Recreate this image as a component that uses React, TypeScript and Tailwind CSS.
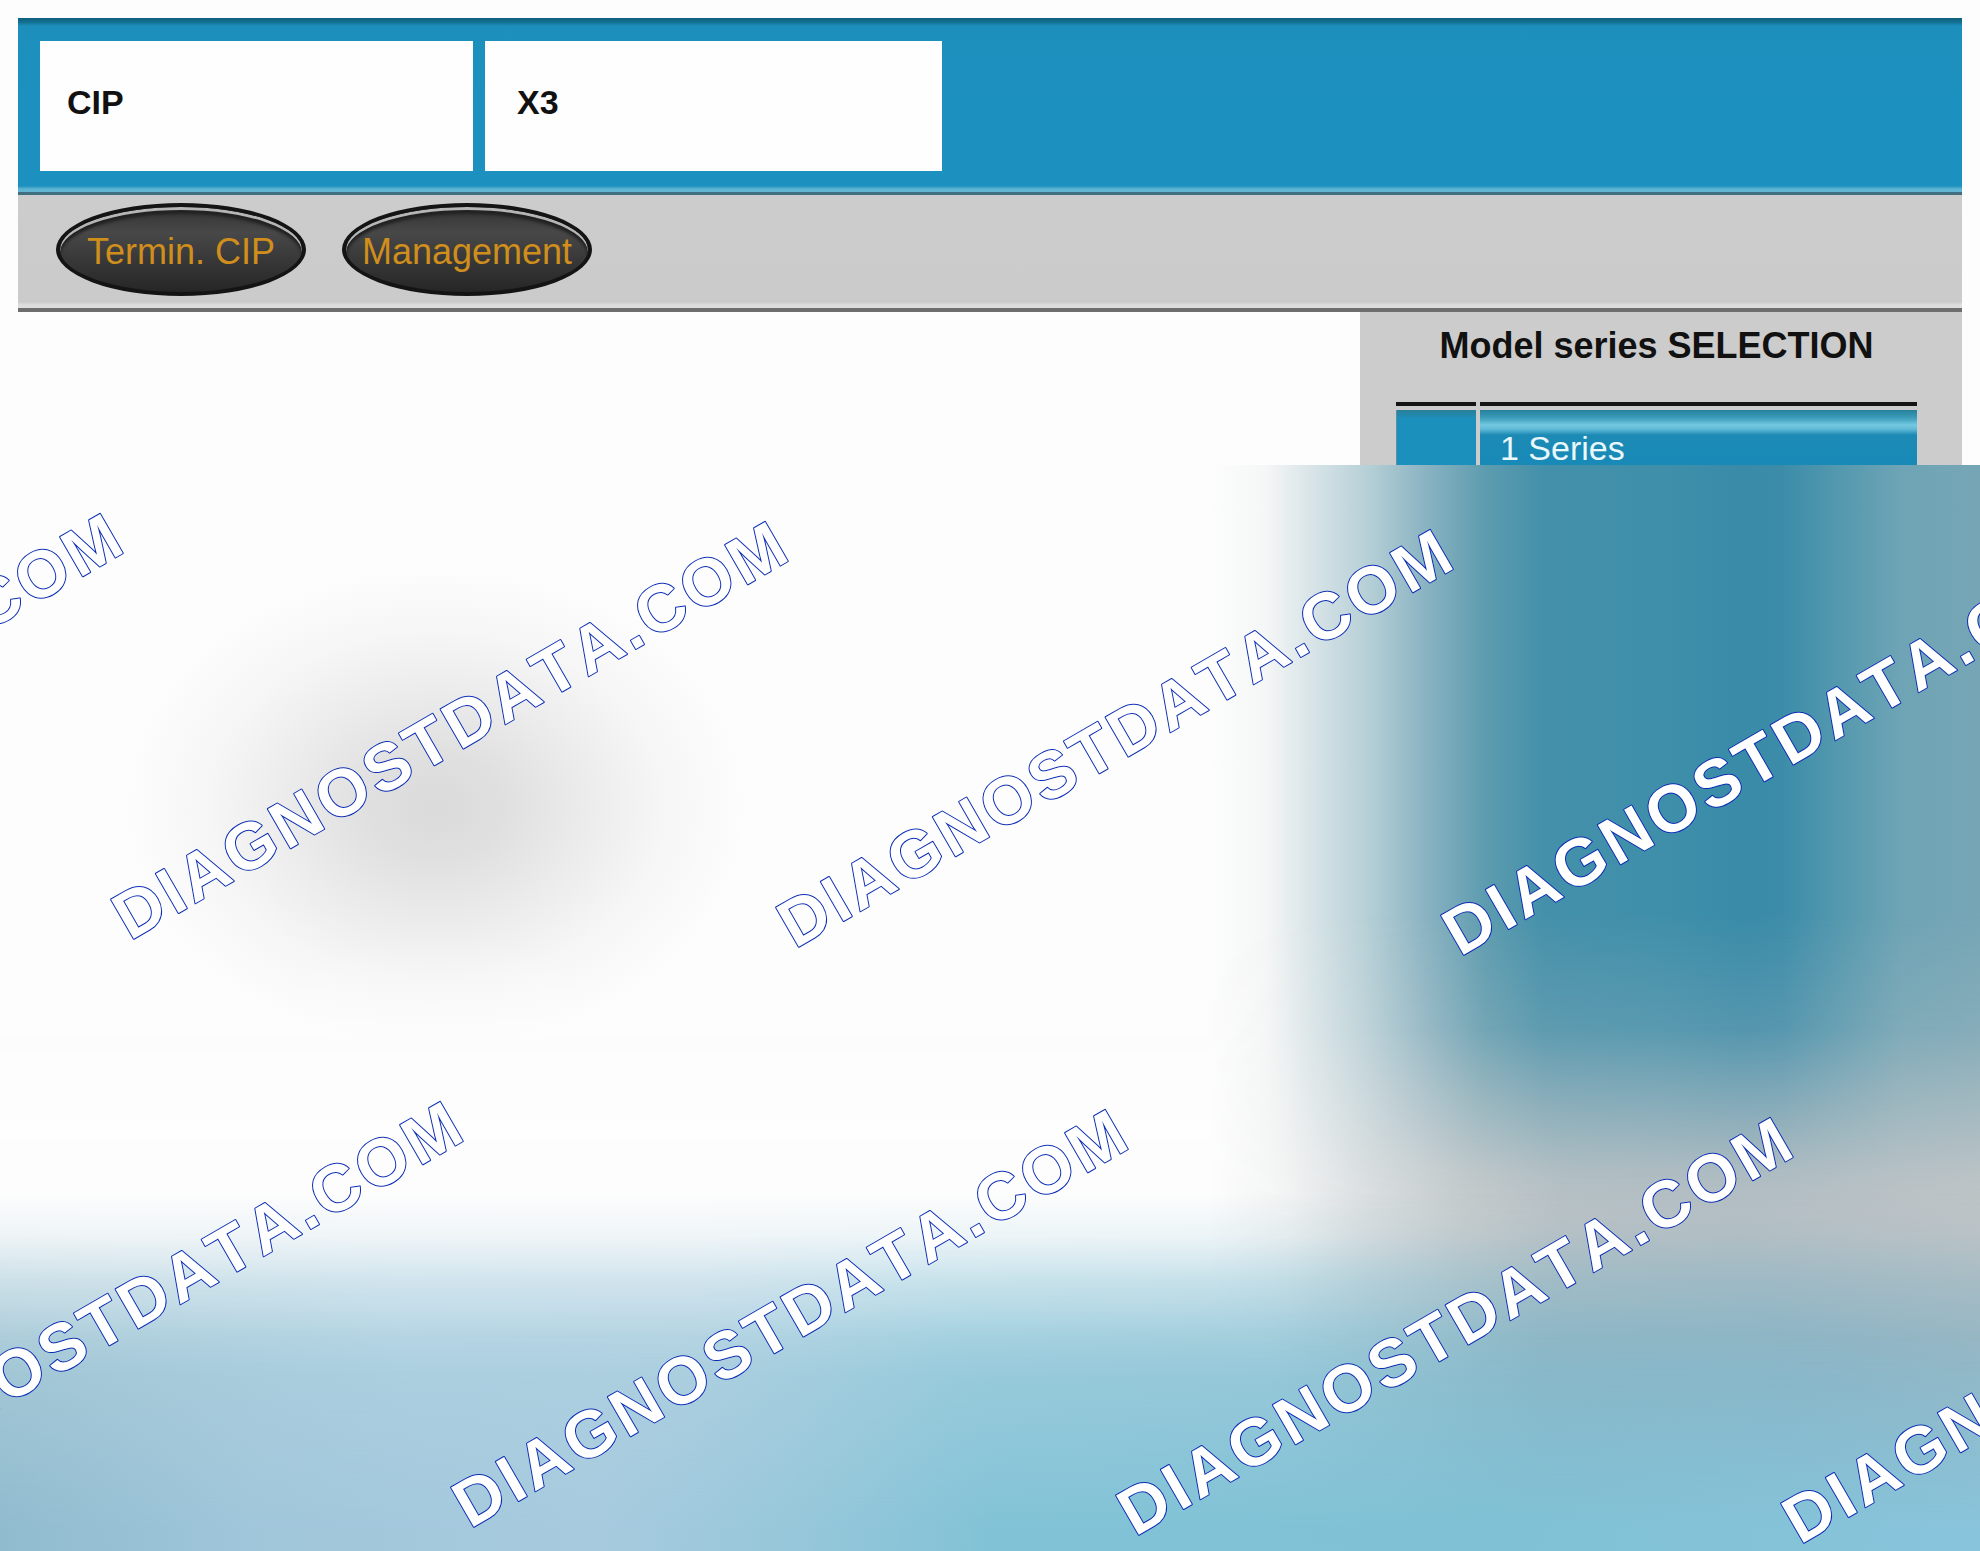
const seriesList = ["1 Series"];

// baseline start of each watermark line
const marks = [
  { x: -535, y: 468 },
  { x: 130, y: 476 },
  { x: 795, y: 484 },
  { x: 1460, y: 492 },
  { x: -195, y: 1056 },
  { x: 470, y: 1064 },
  { x: 1135, y: 1072 },
  { x: 1800, y: 1080 },
];

function InfoBox({ text, className }: { text: string; className: string }) {
  return (
    <div className={`flex items-center bg-[#fefefe] pb-2 text-[34px] leading-10 font-bold text-[#111111] ${className}`}>
      {text}
    </div>
  );
}

function OvalButton({ label }: { label: string }) {
  return (
    <button
      type="button"
      className="h-[93px] w-[250px] rounded-[50%] border-4 border-[#141414] bg-linear-to-b from-[#333333] via-[#484848] via-30% to-[#262626] pt-1 text-4xl whitespace-nowrap text-[#d08e1c] shadow-[inset_0_3px_0_#b5b5b5,inset_0_7px_3px_#222222]"
    >
      {label}
    </button>
  );
}

function Backdrop() {
  return (
    <>
      {/* White area and teal column */}
      <div className="absolute inset-0 bg-[linear-gradient(90deg,#fdfdfd_61%,#f5f6f6_64%,#dbe6e9_66%,#b7d0d7_69%,#8ab3c2_72%,#5d9caf_75%,#4490aa_78%,#3f8faa_84%,#398ba8_88%,#3c8ca9_90%,#5599af_93%,#6ea4b5_96%,#76a6b6_100%)]" />
      {/* Grey shadow */}
      <div className="absolute top-[9%] left-[6%] h-[45%] w-[32%] bg-[radial-gradient(closest-side,#dadada_0%,#e0e0e0_22%,#ebebeb_46%,#f6f6f6_72%,#fdfdfd_100%)]" />
      {/* Grey band */}
      <div className="absolute inset-0 bg-[linear-gradient(90deg,#fdfdfd_61%,#f2f3f3_65%,#dcdfe0_69%,#c8cccd_74%,#bbc2c5_79%,#b8c0c4_88%,#c0c5c7_100%)] mask-[linear-gradient(180deg,transparent_41%,rgb(0_0_0/0.22)_52%,rgb(0_0_0/0.55)_58%,rgb(0_0_0/0.9)_65%,#000_69%)]" />
      {/* Light blue floor */}
      <div className="absolute inset-0 bg-[linear-gradient(90deg,#a6c9d7_0%,#aed1e1_20%,#aed0e0_35%,#9dcddd_48%,#9bcada_64%,#8ab6c6_78%,#8ab4c5_90%,#93b5c3_100%)] mask-[linear-gradient(180deg,transparent_67%,rgb(0_0_0/0.17)_71%,rgb(0_0_0/0.55)_75%,rgb(0_0_0/0.9)_80%,#000_84%)]" />
      <div className="absolute inset-0 bg-[linear-gradient(90deg,#90bbce_0%,#a0c6da_13%,#a7cade_30%,#97c7da_40%,#82c2d6_50%,#80c1d5_75%,#88c4db_100%)] mask-[linear-gradient(180deg,transparent_80%,#000_98%)]" />
    </>
  );
}

function Watermark() {
  return (
    <svg className="absolute inset-0 h-full w-full" aria-hidden="true">
      {marks.map((m) => (
        <text
          key={`${m.x}-${m.y}`}
          transform={`translate(${m.x} ${m.y}) rotate(-30)`}
          strokeLinejoin="round"
          className="fill-white stroke-[#0a2cb4] stroke-2 text-[66px] font-bold tracking-[4px] [font-kerning:none] [paint-order:stroke]"
        >
          DIAGNOSTDATA.COM
        </text>
      ))}
    </svg>
  );
}

export default function App() {
  return (
    <div className="flex min-h-screen flex-col overflow-hidden bg-[#fdfdfd] font-['Liberation_Sans',Arial,sans-serif]">
      <div className="px-[18px] pt-[18px]">
        {/* Title bar */}
        <header className="flex h-[177px] gap-3 border-b-3 border-[#3f6f80] bg-[linear-gradient(180deg,#0d5f7c_0px,#136f90_4px,#1c8fbd_8px,#1c91bf_168px,#5fb5d2_171px,#5fb5d2_174px)] px-[22px] pt-[23px] pb-[21px]">
          <InfoBox text="CIP" className="w-[433px] pl-[27px]" />
          <InfoBox text="X3" className="w-[457px] pl-8" />
        </header>

        {/* Toolbar */}
        <nav className="flex h-[117px] items-start gap-9 border-b-4 border-[#6e6e6e] bg-[linear-gradient(180deg,#cccccc_0px,#cbcbcb_107px,#dedede_110px)] px-[38px] pt-2">
          <OvalButton label="Termin. CIP" />
          <OvalButton label="Management" />
        </nav>

        {/* Model list */}
        <div className="flex h-[153px] justify-end overflow-hidden">
          <aside className="w-[602px] bg-[#cccccc] px-[45px] pt-3 pl-9">
            <h1 className="text-center text-4xl leading-[44px] font-bold text-[#111111]">Model series SELECTION</h1>
            <ul className="mt-[34px]">
              {seriesList.map((name) => (
                <li key={name} className="flex gap-1">
                  <div className="w-20 border-t-4 border-[#151515]">
                    <div className="mt-1 h-14 border-l border-[#5f8d9c] bg-[linear-gradient(180deg,#2b7f98_0px,#1c90bd_9px)]" />
                  </div>
                  <div className="flex-1 border-t-4 border-[#151515]">
                    <button
                      type="button"
                      className="mt-1 flex h-14 w-full items-start bg-[linear-gradient(180deg,#26809b_0px,#3c9dbb_8px,#74c8e0_15px,#62bbd8_19px,#1c8ab4_25px,#188ab8_56px)] px-5 pt-5 text-left text-[34px] leading-9 text-[#e8f8fc]"
                    >
                      {name}
                    </button>
                  </div>
                </li>
              ))}
            </ul>
          </aside>
        </div>
      </div>

      {/* Preview */}
      <section className="relative min-h-[1086px] flex-1 overflow-hidden">
        <Backdrop />
        <Watermark />
      </section>
    </div>
  );
}
